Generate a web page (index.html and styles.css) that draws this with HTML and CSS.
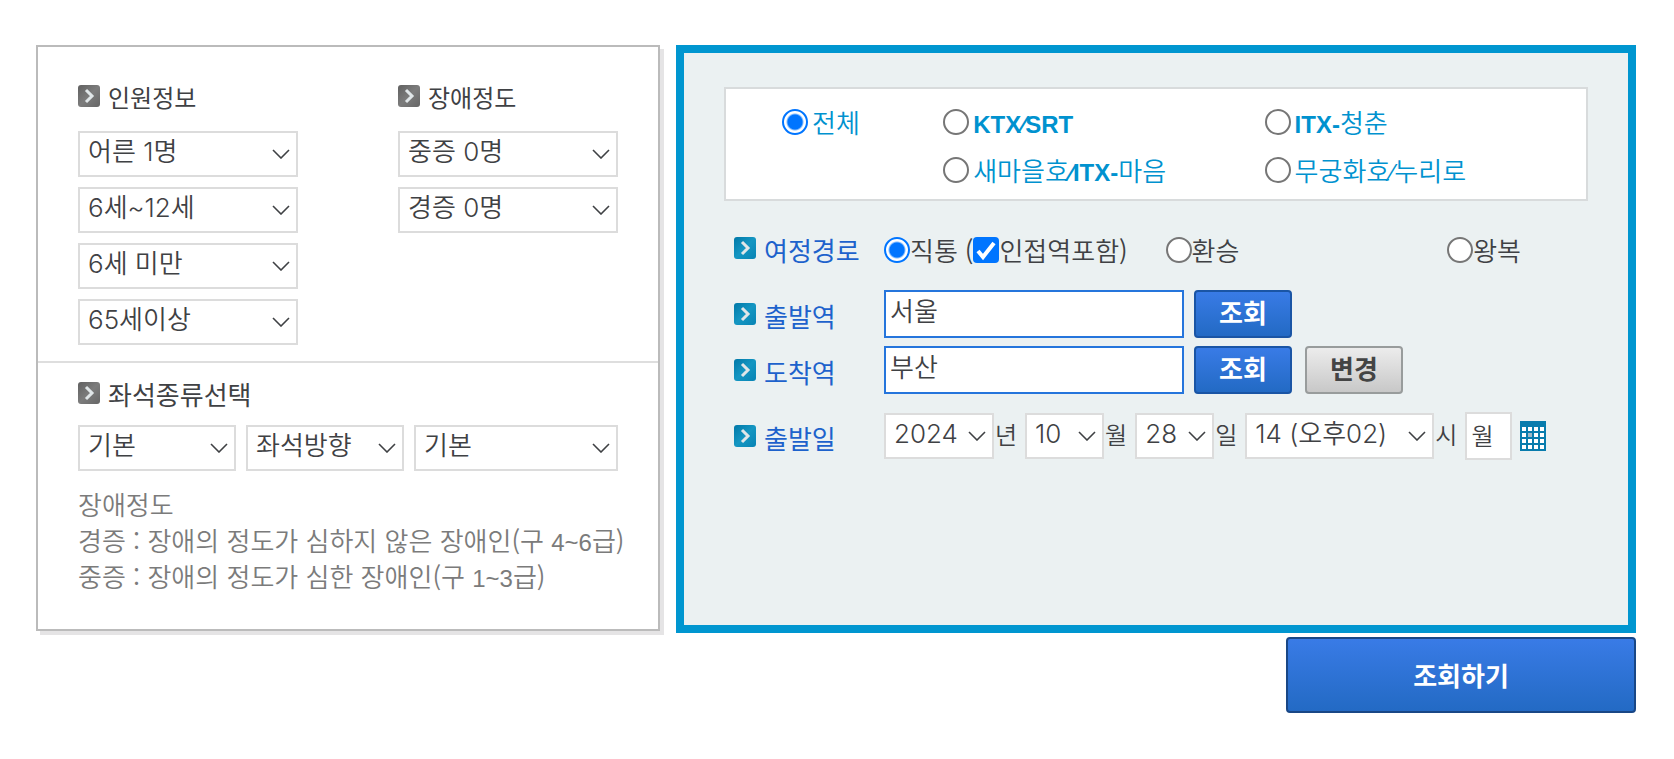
FILE: index.html
```html
<!DOCTYPE html>
<html lang="ko">
<head>
<meta charset="utf-8">
<meta name="viewport" content="width=device-width, initial-scale=1">
<title>승차권 조회</title>
<link rel="stylesheet" href="styles.css">
</head>
<body>
<svg class="defs" aria-hidden="true">
  <defs>
    <linearGradient id="grayFill" x1="0" y1="0" x2="1" y2="1">
      <stop offset="0" stop-color="#606060"/><stop offset="0.5" stop-color="#7c7c7c"/><stop offset="1" stop-color="#666"/>
    </linearGradient>
    <linearGradient id="blueFill" x1="0" y1="0" x2="1" y2="1">
      <stop offset="0" stop-color="#0078a8"/><stop offset="0.5" stop-color="#1496c2"/><stop offset="1" stop-color="#0783b4"/>
    </linearGradient>
    <symbol id="arrow" viewBox="0 0 22 22">
      <path d="M8 5 14 11 8 17" fill="none" stroke="#e0e6e8" stroke-width="3"/>
    </symbol>
  </defs>
</svg>
<form class="page">
  <div class="panels">
    <section class="panel-side">
      <div class="people">
        <div class="stack">
          <h2 class="heading"><svg class="bullet" viewBox="0 0 22 22" aria-hidden="true"><rect width="22" height="22" rx="3" fill="url(#grayFill)"/><use href="#arrow"/></svg><span class="tight">인원정보</span></h2>
          <select class="select" aria-label="어른"><option>어른 1명</option></select>
          <select class="select" aria-label="6세~12세"><option>6세~12세</option></select>
          <select class="select" aria-label="6세 미만"><option>6세 미만</option></select>
          <select class="select" aria-label="65세이상"><option>65세이상</option></select>
        </div>
        <div class="stack">
          <h2 class="heading"><svg class="bullet" viewBox="0 0 22 22" aria-hidden="true"><rect width="22" height="22" rx="3" fill="url(#grayFill)"/><use href="#arrow"/></svg><span class="tight">장애정도</span></h2>
          <select class="select" aria-label="중증"><option>중증 0명</option></select>
          <select class="select" aria-label="경증"><option>경증 0명</option></select>
        </div>
      </div>
      <div class="seats">
        <h2 class="heading"><svg class="bullet" viewBox="0 0 22 22" aria-hidden="true"><rect width="22" height="22" rx="3" fill="url(#grayFill)"/><use href="#arrow"/></svg>좌석종류선택</h2>
        <div class="seat-row">
          <select class="select" aria-label="좌석종류"><option>기본</option></select>
          <select class="select" aria-label="좌석방향"><option>좌석방향</option></select>
          <select class="select" aria-label="좌석속성"><option>기본</option></select>
        </div>
        <div class="notes">
          <p>장애정도</p>
          <p>경증 : 장애의 정도가 심하지 않은 장애인(구 <span class="latin">4~6</span>급)</p>
          <p>중증 : 장애의 정도가 심한 장애인(구 <span class="latin">1~3</span>급)</p>
        </div>
      </div>
    </section>

    <section class="panel-main">
      <div class="trains">
        <label class="choice"><input type="radio" name="train" checked>전체</label>
        <label class="choice"><input type="radio" name="train"><span><b class="latin">KTX⁄SRT</b></span></label>
        <label class="choice"><input type="radio" name="train"><span><b class="latin">ITX-</b>청춘</span></label>
        <label class="choice second"><input type="radio" name="train"><span>새마을호<b class="latin">⁄ITX-</b>마음</span></label>
        <label class="choice"><input type="radio" name="train"><span>무궁화호<span class="latin">⁄</span>누리로</span></label>
      </div>

      <div class="rows">
        <div class="row journey">
          <div class="label"><svg class="bullet" viewBox="0 0 22 22" aria-hidden="true"><rect width="22" height="22" rx="3" fill="url(#blueFill)"/><use href="#arrow"/></svg>여정경로</div>
          <div class="routes">
            <div class="route-direct">
              <label class="route"><input type="radio" name="route" checked>직통</label>
              <span class="paren">(</span>
              <label class="route"><input type="checkbox" checked>인접역포함</label>
              <span>)</span>
            </div>
            <label class="route"><input type="radio" name="route">환승</label>
            <label class="route"><input type="radio" name="route">왕복</label>
          </div>
        </div>
        <div class="row">
          <label class="label" for="from"><svg class="bullet" viewBox="0 0 22 22" aria-hidden="true"><rect width="22" height="22" rx="3" fill="url(#blueFill)"/><use href="#arrow"/></svg>출발역</label>
          <div class="station">
            <input class="text" id="from" type="text" value="서울">
            <button class="btn" type="button">조회</button>
          </div>
        </div>
        <div class="row">
          <label class="label" for="to"><svg class="bullet" viewBox="0 0 22 22" aria-hidden="true"><rect width="22" height="22" rx="3" fill="url(#blueFill)"/><use href="#arrow"/></svg>도착역</label>
          <div class="station">
            <input class="text" id="to" type="text" value="부산">
            <button class="btn" type="button">조회</button>
            <button class="btn btn-gray" type="button">변경</button>
          </div>
        </div>
        <div class="row date-row">
          <div class="label"><svg class="bullet" viewBox="0 0 22 22" aria-hidden="true"><rect width="22" height="22" rx="3" fill="url(#blueFill)"/><use href="#arrow"/></svg>출발일</div>
          <div class="date">
            <label class="unit"><select class="select year"><option>2024</option></select><span>년</span></label>
            <label class="unit"><select class="select short"><option>10</option></select><span>월</span></label>
            <label class="unit"><select class="select short"><option>28</option></select><span>일</span></label>
            <label class="unit"><select class="select hour"><option>14 (오후02)</option></select><span>시</span></label>
            <input class="weekday" type="text" value="월" aria-label="요일" readonly>
            <button class="calendar" type="button" aria-label="달력">
              <svg viewBox="0 0 26 30" width="26" height="30" aria-hidden="true">
                <rect width="26" height="30" fill="#087cad"/>
                <g fill="#fff">
                  <path d="M2 6h4v4H2zM8 6h4v4H8zM14 6h4v4h-4zM20 6h4v4h-4z"/>
                  <path d="M2 12h4v4H2zM8 12h4v4H8zM14 12h4v4h-4zM20 12h4v4h-4z"/>
                  <path d="M2 18h4v4H2zM8 18h4v4H8zM14 18h4v4h-4zM20 18h4v4h-4z"/>
                  <path d="M2 24h4v4H2zM8 24h4v4H8zM14 24h4v4h-4zM20 24h4v4h-4z"/>
                </g>
                <path d="M8 12h4v4H8z" fill="#9fb8c6"/>
              </svg>
            </button>
          </div>
        </div>
      </div>
    </section>
  </div>
  <div class="actions"><button class="btn submit" type="submit">조회하기</button></div>
</form>
</body>
</html>
```

FILE: styles.css
```css
* { box-sizing: border-box; }

body {
  margin: 0;
  background: #fff;
  color: #3f4144;
  font: 350 26px/26px "Noto Sans CJK KR", sans-serif;
}

input, select, button { font: inherit; color: inherit; margin: 0; }
h2, p { margin: 0; }

.defs { position: absolute; width: 0; height: 0; }
.latin { font-family: "Liberation Sans", sans-serif; font-size: 24px; line-height: 16px; }
b.latin { font-weight: 700; }

.page { padding: 45px 38px 45px 36px; }

.panels {
  display: grid;
  grid-template-columns: minmax(0, 13fr) minmax(0, 20fr);
  gap: 16px;
}

.panel-side {
  margin-bottom: 2px;
  border: 2px solid #bbb;
  box-shadow: 4px 4px 0 #e5e4e5;
}

.people {
  display: grid;
  grid-template-columns: 1fr 1fr;
  gap: 100px;
  padding: 37px 40px 16px;
  border-bottom: 2px solid #dedede;
}

.stack { display: flex; flex-direction: column; gap: 10px; }

.heading {
  display: flex;
  align-items: center;
  gap: 8px;
  font-size: 26px;
  font-weight: 400;
  line-height: 26px;
}
.stack .heading { margin-bottom: 11px; }
.tight { font-size: 24px; }

.bullet { flex: none; width: 22px; height: 22px; margin-bottom: 2px; }

.select {
  appearance: none;
  width: 100%;
  height: 46px;
  padding: 0 30px 4px 8px;
  border: 2px solid #dcdcdc;
  border-radius: 0;
  background: #fff url("data:image/svg+xml,%3Csvg xmlns='http://www.w3.org/2000/svg' width='18' height='10'%3E%3Cpath d='M1 1l8 8 8-8' fill='none' stroke='%233f4144' stroke-width='1.6'/%3E%3C/svg%3E") no-repeat right 6px center;
  font-family: Inter, "Noto Sans CJK KR", sans-serif;
}

.seats { padding: 18px 40px 35px; }
.seat-row {
  display: grid;
  grid-template-columns: 79fr 79fr 102fr;
  gap: 10px;
  margin-top: 18px;
}
.notes {
  margin-top: 15px;
  color: #7b7b7b;
  line-height: 36px;
  white-space: nowrap;
}

.panel-main {
  padding: 34px 40px;
  border: 8px solid #0096d0;
  background: #ebf1f2;
}

.trains {
  display: grid;
  grid-template-columns: 161fr 321fr 321fr;
  row-gap: 22px;
  padding: 20px 0 16px 56px;
  border: 2px solid #d8dbdc;
  background: #fff;
  color: #0092cf;
}
.choice { display: flex; align-items: center; gap: 4px; white-space: nowrap; }
.choice.second { grid-column: 2; }

input[type="radio"], input[type="checkbox"] {
  appearance: none;
  flex: none;
  width: 26px;
  height: 26px;
  border: 2px solid #767676;
  border-radius: 50%;
  background: #fff;
}
input[type="radio"]:checked {
  border-color: #0075ff;
  background: radial-gradient(circle, #0075ff 7px, #fff 9px);
}
input[type="checkbox"] {
  border: 0;
  border-radius: 4px;
  background: #0075ff url("data:image/svg+xml,%3Csvg xmlns='http://www.w3.org/2000/svg' width='26' height='26'%3E%3Cpath d='M5 14l5 6L21 6' fill='none' stroke='white' stroke-width='4'/%3E%3C/svg%3E") center no-repeat;
}

.rows { display: grid; gap: 8px; padding-top: 36px; padding-left: 10px; }
.row { display: grid; grid-template-columns: 150px 1fr; align-items: center; }
.journey { margin-bottom: 19px; }
.date-row { margin-top: 10px; }
.label { display: flex; align-items: center; gap: 8px; color: #1d62cc; font-weight: 400; }
.row:not(.journey) .label { padding-top: 4px; }
.label .bullet { margin-bottom: 4px; }

.routes { display: grid; grid-template-columns: 2fr 2fr 1fr; white-space: nowrap; }
.route, .route-direct { display: flex; align-items: center; }
.paren { margin-left: 7px; }

.station { display: flex; gap: 10px; }
.text {
  flex: 0 1 300px;
  min-width: 0;
  height: 48px;
  padding: 0 4px 10px;
  border: 2px solid #2575dc;
}

.btn {
  width: 98px;
  height: 48px;
  padding: 0 0 4px;
  border: 2px solid #1a55a5;
  border-radius: 4px;
  background: linear-gradient(#397be6, #236ac4);
  color: #fff;
  font-weight: 700;
}
.btn-gray {
  margin-left: 3px;
  border-color: #989c9c;
  background: linear-gradient(#ececec, #c8c8c8);
  color: #444;
}

.date { display: flex; align-items: center; gap: 8px; }
.unit { display: flex; align-items: center; gap: 1px; font-size: 24px; white-space: nowrap; }
.unit span { padding-bottom: 4px; }
.date .select { padding-right: 0; font-size: 26px; }
.year { width: 110px; }
.short { width: 79px; }
.hour { width: 189px; }
.weekday {
  width: 47px;
  height: 48px;
  padding: 0 0 4px 4px;
  border: 2px solid #dcdcdc;
  background: #fff;
  font-size: 24px;
}
.calendar { display: flex; padding: 0; border: 0; background: none; }

.actions { display: flex; justify-content: flex-end; margin-top: 4px; }
.submit { width: 350px; height: 76px; padding: 0; border-color: #194786; }
```
